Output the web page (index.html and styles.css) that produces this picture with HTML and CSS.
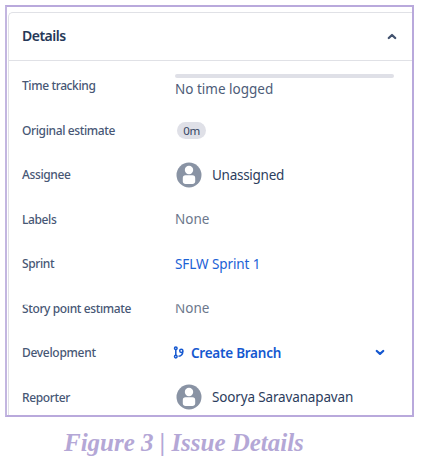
FILE: index.html
```html
<!DOCTYPE html>
<html lang="en">
<head>
<meta charset="utf-8">
<title>Issue Details</title>
<link rel="stylesheet" href="styles.css">
</head>
<body>
<figure class="figure">
  <div class="frame">
    <section class="panel">
      <header class="head">
        <h2>Details</h2>
        <svg class="chevron" width="10" height="7" viewBox="0 0 10 7"><path d="M1.8 5 5 2l3.2 3"/></svg>
      </header>
      <dl class="fields">
        <div class="row"><dt>Time tracking</dt><dd class="time"><span class="bar"></span><span>No time logged</span></dd></div>
        <div class="row"><dt>Original estimate</dt><dd><span class="pill">0m</span></dd></div>
        <div class="row"><dt>Assignee</dt><dd class="person"><svg class="avatar" width="26" height="26" viewBox="0 0 26 26"><circle class="disc" cx="13" cy="13" r="12.5"/><circle cx="13" cy="8" r="4.2"/><path d="M6.8 16a2.7 2.7 0 0 1 2.7-2.7h7a2.7 2.7 0 0 1 2.7 2.7v3.6c0 1.6-1.2 2.4-2.7 2.4h-7c-1.5 0-2.7-.8-2.7-2.4z"/></svg><span class="unassigned">Unassigned</span></dd></div>
        <div class="row"><dt>Labels</dt><dd class="none">None</dd></div>
        <div class="row"><dt>Sprint</dt><dd class="link">SFLW Sprint 1</dd></div>
        <div class="row clipped"><dt>Story point estimate</dt><dd class="none">None</dd></div>
        <div class="row"><dt class="development">Development</dt><dd class="branch"><svg class="git" width="11" height="13" viewBox="0 0 11 13"><circle cx="2.8" cy="2.3" r="1.3"/><circle cx="2.8" cy="10.6" r="1.3"/><circle cx="8.3" cy="4.8" r="1.6"/><path d="M2.8 3.6v5.700M9.800 5.200c0 2.900-1.800 4.800-4.300 5"/></svg><span>Create Branch</span><svg class="chevron blue" width="10" height="7" viewBox="0 0 10 7"><path d="M1.8 2 5 4.8 8.2 2"/></svg></dd></div>
        <div class="row"><dt>Reporter</dt><dd class="person"><svg class="avatar" width="26" height="26" viewBox="0 0 26 26"><circle class="disc" cx="13" cy="13" r="12.5"/><circle cx="13" cy="8" r="4.2"/><path d="M6.8 16a2.7 2.7 0 0 1 2.7-2.7h7a2.7 2.7 0 0 1 2.7 2.7v3.6c0 1.6-1.2 2.4-2.7 2.4h-7c-1.5 0-2.7-.8-2.7-2.4z"/></svg><span>Soorya Saravanapavan</span></dd></div>
      </dl>
    </section>
  </div>
  <figcaption>Figure 3 | Issue Details</figcaption>
</figure>
</body>
</html>
```
FILE: styles.css
```css
* { box-sizing: border-box; }
body { margin: 0; background: #fff; font-family: "Noto Sans", "Open Sans", sans-serif; color: #2c3d5d; overflow: hidden; }
.figure { margin: 0; padding: 5px 0 0 5px; }
.frame { width: 409px; height: 412px; border: 2px solid #b9a9dc; border-left-color: #c3b6e0; padding: 5px 0 0 1px; overflow: hidden; }
.panel { height: 420px; border: 1px solid #e0e1e6; border-right: 0; border-radius: 5px 0 0 0; }
.head { height: 48px; border-bottom: 1px solid #e0e1e6; display: flex; align-items: center; justify-content: space-between; padding: 0 15px 1px 13px; }
h2 { margin: 0; font-size: 14px; font-weight: 600; line-height: 20px; letter-spacing: -.5px; color: #253858; }
.chevron { fill: none; stroke: #42526e; stroke-width: 2.3; stroke-linecap: round; stroke-linejoin: round; }
.chevron.blue { stroke: #1558d0; }
.fields { margin: 0; padding-top: 2.5px; }
.row { height: 44.5px; display: grid; grid-template-columns: 153px 219px; align-items: center; padding-left: 13px; white-space: nowrap; }
dt { font-size: 12px; font-weight: 500; line-height: 18px; letter-spacing: -.38px; padding-top: 1px; color: #475775; }
dt.development { letter-spacing: -.3px; }
dd { margin: 0; font-size: 13.5px; line-height: 20px; color: #4d5c78; }
.time { display: flex; flex-direction: column; gap: 1px; padding-top: 1px; }
.bar { height: 4px; border-radius: 2px; background: #dfe0e7; }
.pill { display: block; width: 29px; height: 17px; margin-left: 2px; border-radius: 9px; background: #dfe0e7; font-size: 11.5px; line-height: 17px; letter-spacing: -.3px; text-align: center; color: #344563; }
.person { display: flex; align-items: center; gap: 10px; padding-left: 1px; color: #2c3d5d; letter-spacing: -.15px; }
.unassigned { letter-spacing: -.27px; }
.avatar { fill: #fff; flex: none; }
.disc { fill: #8993a4; }
.none { color: #6b778c; }
.link { color: #1b62d6; letter-spacing: -.08px; }
.clipped dt { clip-path: inset(6px 0 0 0); }
.clipped dd { clip-path: inset(6px 0 0 0); }
.branch { display: flex; align-items: center; color: #1558d0; font-weight: 600; letter-spacing: -.25px; padding-right: 9px; }
.git { margin: 0 7px 0 -2px; fill: none; stroke: #1558d0; stroke-width: 1.5; }
.branch .chevron { margin-left: auto; }
figcaption { margin: 11px 0 0 59px; font: italic bold 25px/30px "Liberation Serif", serif; letter-spacing: -.02px; color: #b4a7d6; white-space: nowrap; }
```
